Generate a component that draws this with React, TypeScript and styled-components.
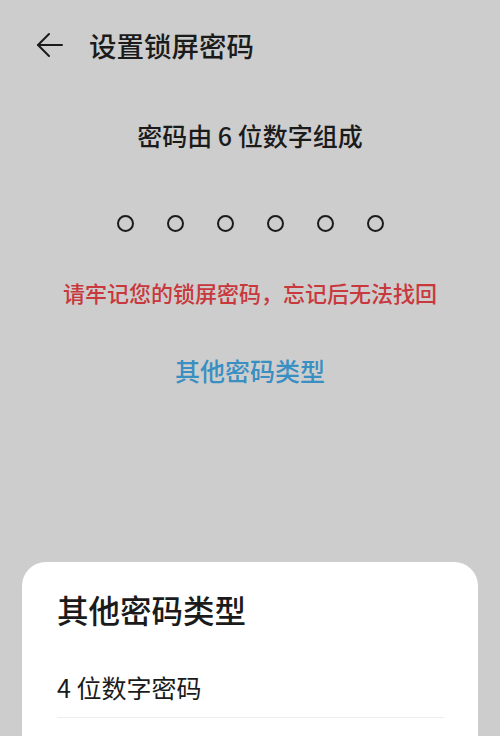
import React from "react";
import styled, { createGlobalStyle } from "styled-components";

const Global = createGlobalStyle`
  html, body { margin: 0; padding: 0; background: #cdcdcd; }
  body { font-family: "Noto Sans CJK SC", "Noto Sans", sans-serif; }
`;

const Page = styled.div`
  width: 500px;
  height: 736px;
  overflow: hidden;
  display: flex;
  flex-direction: column;
  background: #cdcdcd;
  color: #1b1b1b;
`;

const Header = styled.header`
  height: 90px;
  display: flex;
  align-items: center;
  padding-left: 36px;
  gap: 25px;
`;

const Back = styled.button`
  width: 28px;
  height: 28px;
  padding: 0;
  border: 0;
  background: none;
  display: flex;
  align-items: center;
  justify-content: center;
  color: #1b1b1b;
`;

const Title = styled.h1`
  margin: 0;
  font-size: 27.5px;
  line-height: 36px;
  font-weight: 500;
`;

const Center = styled.p<{ $size: number; $color?: string; $top: number; $lh: number }>`
  margin: ${(p) => p.$top}px 0 0;
  text-align: center;
  font-size: ${(p) => p.$size}px;
  line-height: ${(p) => p.$lh}px;
  font-weight: 500;
  color: ${(p) => p.$color || "#1b1b1b"};
`;

const Dots = styled.div`
  margin-top: 65px;
  display: flex;
  justify-content: center;
  gap: 33px;
  height: 17px;
`;

const Dot = styled.span`
  width: 17px;
  height: 17px;
  box-sizing: border-box;
  border: 2.6px solid #1b1b1b;
  border-radius: 50%;
`;

const Sheet = styled.section`
  margin: 177px 22px 0;
  flex: 1 0 auto;
  background: #ffffff;
  border-radius: 24px 24px 0 0;
  padding: 27px 34px 0 35px;
`;

const SheetTitle = styled.h2`
  margin: 0;
  font-size: 31.5px;
  line-height: 40px;
  font-weight: 500;
`;

const Option = styled.div`
  margin-top: 43px;
  padding-bottom: 15px;
  font-size: 25px;
  line-height: 30px;
  border-bottom: 1.5px solid #ededed;
`;

export default function App() {
  return (
    <>
      <Global />
      <Page>
        <Header>
          <Back aria-label="返回">
            <svg width="28" height="28" viewBox="0 0 28 28" fill="none" stroke="#1b1b1b" strokeWidth="2" strokeLinecap="round" strokeLinejoin="round">
              <path d="M26 14H2" />
              <path d="M13 3L2 14l11 11" />
            </svg>
          </Back>
          <Title>设置锁屏密码</Title>
        </Header>
        <Center $size={25} $top={30} $lh={30}>密码由 6 位数字组成</Center>
        <Dots>
          {[0, 1, 2, 3, 4, 5].map((i) => (
            <Dot key={i} />
          ))}
        </Dots>
        <Center $size={22} $top={48} $lh={24} $color="#c8383c">请牢记您的锁屏密码，忘记后无法找回</Center>
        <Center $size={25} $top={51} $lh={30} $color="#3a8fc2">其他密码类型</Center>
        <Sheet>
          <SheetTitle>其他密码类型</SheetTitle>
          <Option>4 位数字密码</Option>
        </Sheet>
      </Page>
    </>
  );
}
